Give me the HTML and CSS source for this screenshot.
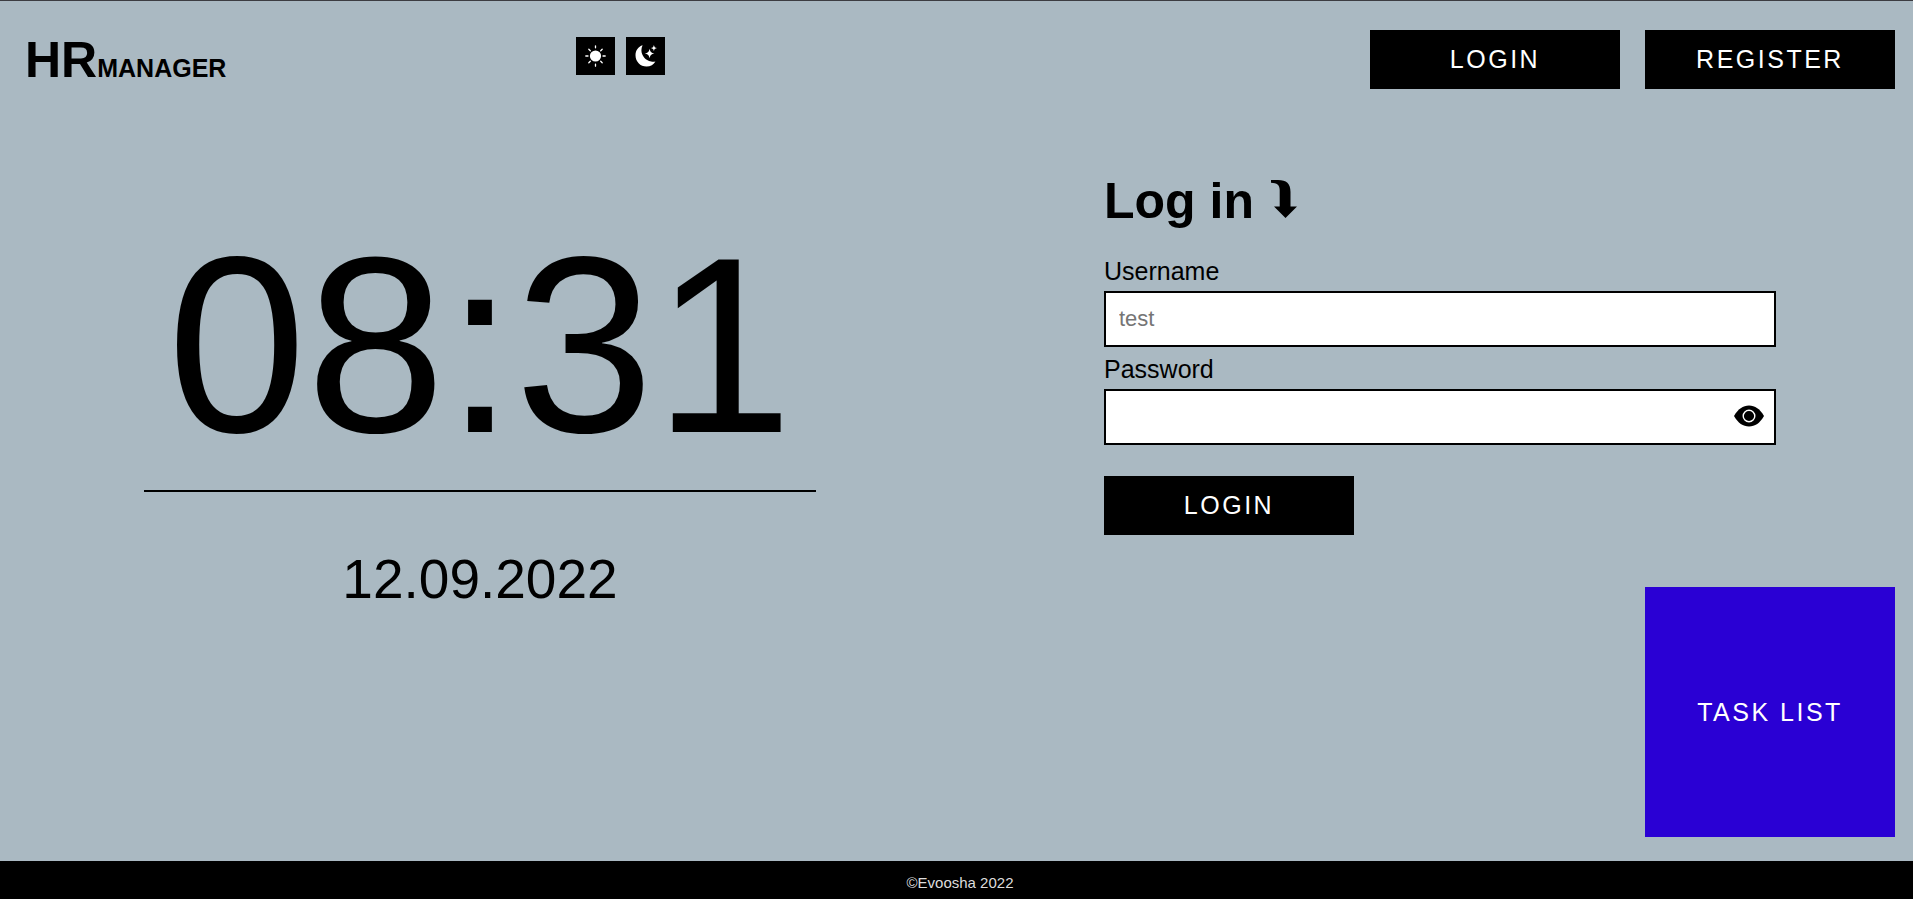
FILE: index.html
```html
<!DOCTYPE html>
<html lang="en">
<head>
<meta charset="utf-8">
<title>HR Manager</title>
<link rel="stylesheet" href="styles.css">
</head>
<body>
<div class="page">
  <header class="header">
    <div class="logo">HR<span class="logo-small">MANAGER</span></div>
    <div class="themes">
      <button class="theme-btn" type="button" aria-label="Light theme">
        <svg width="21" height="22" viewBox="0 0 21 22" fill="#fff" stroke="#fff" stroke-width="1.3" stroke-linecap="round">
          <circle cx="10.5" cy="11" r="5.6" stroke="none"/>
          <path d="M10.5 .8v2M10.5 19.200v2M.8 11h2.200M18 11h2.200M3.800 4.300l1.500 1.500M15.700 16.200l1.500 1.500M3.800 17.700l1.500-1.500M15.700 5.800l1.500-1.500"/>
        </svg>
      </button>
      <button class="theme-btn" type="button" aria-label="Dark theme">
        <svg width="22" height="22" viewBox="0 0 22 22" fill="#fff">
          <path d="M7.600 0.200C3.300 1.500 0.500 5.400 0.500 10.200c0 6.300 4.800 11.300 11 11.300 4 0 7.300-2 8.900-5.100-1.500.3-2.900.4-4.200.1C10.400 15.400 6.400 10.500 6.400 5.200c0-1.800.4-3.500 1.200-5z"/>
          <path d="M14.600 3.700c.7 3.200 1.600 4.100 4.800 4.800-3.200.7-4.100 1.600-4.800 4.800-.7-3.200-1.600-4.100-4.800-4.800 3.200-.7 4.100-1.600 4.800-4.800z"/>
          <path d="M18.900 0c.5 2.100 1 2.600 3.100 3.100-2.100.5-2.600 1-3.100 3.100-.5-2.100-1-2.600-3.100-3.100 2.100-.5 2.600-1 3.100-3.100z"/>
        </svg>
      </button>
    </div>
    <nav class="actions">
      <button class="btn" type="button">LOGIN</button>
      <button class="btn" type="button">REGISTER</button>
    </nav>
  </header>
  <main class="main">
    <section class="clock">
      <time class="time">08:31</time>
      <time class="date">12.09.2022</time>
    </section>
    <section class="side">
      <form class="form">
        <h1 class="title">Log in
          <svg class="title-arrow" width="26" height="38" viewBox="0 0 26 38"><path d="M0 0h7C15.500 0 19.500 3.500 19.500 12v14.500H26L14.500 38 3 26.500h5.700V10C8.700 5 6 3 0 2.800z"/></svg>
        </h1>
        <label class="label" for="username">Username</label>
        <input class="input" id="username" type="text" placeholder="test">
        <label class="label" for="password">Password</label>
        <div class="password">
          <input class="input" id="password" type="password">
          <button class="eye" type="button" aria-label="Show password">
            <svg width="30" height="22" viewBox="0 0 30 22">
              <path d="M0 11C4 4 9 .5 15 .5S26 4 30 11c-4 7-9 10.500-15 10.500S4 18 0 11z"/>
              <circle cx="15" cy="11" r="5.800" fill="none" stroke="#fff" stroke-width="1.400"/>
            </svg>
          </button>
        </div>
        <button class="btn submit" type="button">LOGIN</button>
      </form>
      <button class="btn tasks" type="button">TASK LIST</button>
    </section>
  </main>
  <footer class="footer">©Evoosha 2022</footer>
</div>
</body>
</html>
```
FILE: styles.css
```css
* {
  box-sizing: border-box;
}

body {
  margin: 0;
  overflow: hidden;
  background: #aab9c2;
  color: #000;
  font-family: Arial, "Liberation Sans", sans-serif;
}

.page {
  display: flex;
  flex-direction: column;
  min-height: 100vh;
  margin-right: -7px;
  border-top: 1px solid #3c3c41;
}

.header {
  display: grid;
  grid-template-columns: 30% 1fr auto;
  align-items: start;
  padding-top: 29px;
}

.logo {
  padding-left: 25px;
  font-size: 50px;
  font-weight: bold;
  line-height: 60px;
}

.logo-small {
  font-size: 25px;
}

.themes {
  display: flex;
  gap: 11px;
  padding-top: 7px;
}

.theme-btn {
  display: flex;
  align-items: center;
  justify-content: center;
  width: 39px;
  height: 38px;
  padding: 0;
  border: 0;
  background: #000;
}

.actions {
  display: flex;
  gap: 25px;
  padding-right: 25px;
}

.btn {
  width: 250px;
  padding: 15px;
  border: 0;
  background: #000;
  color: #fff;
  font-family: inherit;
  font-size: 25px;
  line-height: 29px;
  letter-spacing: 0.1em;
}

.main {
  display: grid;
  flex: 1;
  grid-template-columns: 1fr 1fr;
}

.clock {
  display: flex;
  flex-direction: column;
  padding: 104px 15% 0;
  text-align: center;
}

.time {
  border-bottom: 2px solid #000;
  font-size: 250px;
  line-height: 288px;
}

.date {
  padding-top: 56px;
  font-size: 55px;
  line-height: 63px;
}

.side {
  display: flex;
  flex-direction: column;
}

.form {
  display: flex;
  flex-direction: column;
  padding: 74px 15% 0;
}

.title {
  margin: 0 0 27px;
  font-size: 50px;
  line-height: 58px;
}

.title-arrow {
  margin-left: 3px;
}

.label {
  font-size: 25px;
  line-height: 29px;
}

.input {
  width: 100%;
  height: 56px;
  margin: 5px 0 8px;
  padding: 0 13px;
  border: 2px solid #000;
  border-radius: 0;
  background: #fff;
  font-family: inherit;
  font-size: 22px;
}

.input::placeholder {
  color: #757575;
}

.password {
  position: relative;
}

.eye {
  position: absolute;
  top: 21px;
  right: 12px;
  display: flex;
  padding: 0;
  border: 0;
  background: none;
}

.submit {
  margin-top: 23px;
}

.tasks {
  align-self: flex-end;
  height: 250px;
  margin: auto 25px 24px 0;
  background: #2a00d4;
}

.footer {
  padding: 13px 0 8px;
  background: #000;
  color: #ddd;
  font-size: 15px;
  line-height: 17px;
  text-align: center;
}
```
